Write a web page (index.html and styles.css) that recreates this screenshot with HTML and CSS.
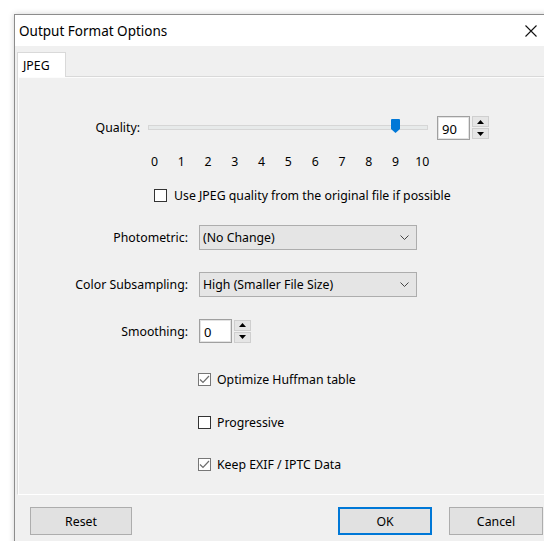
FILE: index.html
```html
<!DOCTYPE html>
<html>
<head>
<meta charset="utf-8">
<title>Output Format Options</title>
<link rel="stylesheet" href="styles.css">
</head>
<body>
<div class="window">
  <div class="titlebar">
    <span class="title">Output Format Options</span>
    <svg class="close" width="12" height="12" viewBox="0 0 12 12"><path d="M0.5 0.5 L11.5 11.5 M11.5 0.5 L0.5 11.5" stroke="#111" stroke-width="1.1" fill="none"/></svg>
  </div>
  <div class="client">
    <div class="tabs">
      <div class="tab">JPEG</div>
    </div>
    <div class="pane">
      <div class="row quality-row">
        <span class="quality-label">Quality:</span>
        <div class="slider">
          <div class="track"></div>
          <svg class="thumb" style="left: 243px" width="9" height="14" viewBox="0 0 9 14"><path d="M0 1 Q0 0 1 0 L8 0 Q9 0 9 1 L9 10 L4.5 14 L0 10 Z" fill="#0078d7"/></svg>
        </div>
        <div class="spin">
          <div class="spin-box">90</div>
          <div class="spin-buttons">
            <div class="spin-btn"><svg width="7" height="4" viewBox="0 0 7 4"><path d="M3.5 0 L7 4 L0 4 Z" fill="#000"/></svg></div>
            <div class="spin-btn"><svg width="7" height="4" viewBox="0 0 7 4"><path d="M0 0 L7 0 L3.5 4 Z" fill="#000"/></svg></div>
          </div>
        </div>
      </div>
      <div class="ticks">
        <span>0</span><span>1</span><span>2</span><span>3</span><span>4</span><span>5</span><span>6</span><span>7</span><span>8</span><span>9</span><span>10</span>
      </div>
      <label class="check check-wide"><span class="box"></span>Use JPEG quality from the original file if possible</label>
      <div class="row field field-photo">
        <span class="label">Photometric:</span>
        <div class="select"><span>(No Change)</span><svg width="9" height="5" viewBox="0 0 9 5"><path d="M0.5 0.5 L4.5 4.5 L8.5 0.5" stroke="#444" fill="none"/></svg></div>
      </div>
      <div class="row field field-color">
        <span class="label">Color Subsampling:</span>
        <div class="select"><span>High (Smaller File Size)</span><svg width="9" height="5" viewBox="0 0 9 5"><path d="M0.5 0.5 L4.5 4.5 L8.5 0.5" stroke="#444" fill="none"/></svg></div>
      </div>
      <div class="row field field-smooth">
        <span class="label">Smoothing:</span>
        <div class="spin">
          <div class="spin-box">0</div>
          <div class="spin-buttons">
            <div class="spin-btn"><svg width="7" height="4" viewBox="0 0 7 4"><path d="M3.5 0 L7 4 L0 4 Z" fill="#000"/></svg></div>
            <div class="spin-btn"><svg width="7" height="4" viewBox="0 0 7 4"><path d="M0 0 L7 0 L3.5 4 Z" fill="#000"/></svg></div>
          </div>
        </div>
      </div>
      <label class="check opt opt-huff"><span class="box checked"><svg width="11" height="9" viewBox="0 0 11 9"><path d="M1 4.5 L4 7.5 L10 1" stroke="#6d6d6d" stroke-width="1.2" fill="none"/></svg></span>Optimize Huffman table</label>
      <label class="check opt opt-prog"><span class="box"></span>Progressive</label>
      <label class="check opt opt-exif"><span class="box checked"><svg width="11" height="9" viewBox="0 0 11 9"><path d="M1 4.5 L4 7.5 L10 1" stroke="#6d6d6d" stroke-width="1.2" fill="none"/></svg></span>Keep EXIF / IPTC Data</label>
    </div>
    <div class="buttons">
      <button class="btn btn-reset">Reset</button>
      <span class="spacer"></span>
      <button class="btn btn-ok">OK</button>
      <button class="btn btn-cancel">Cancel</button>
    </div>
  </div>
</div>
</body>
</html>
```

FILE: styles.css
```css
html, body {
  margin: 0;
  padding: 0;
  background: #ffffff;
  overflow: hidden;
}

body {
  font-family: "Noto Sans", "Open Sans", sans-serif;
  font-size: 12.3px;
  color: #000;
}

.window {
  margin: 14px 0 0 14px;
  width: 560px;
  height: 560px;
  border: 1px solid #8c8c8c;
  box-shadow: 0 0 6px rgba(0, 0, 0, 0.18);
  background: #f0f0f0;
  box-sizing: border-box;
}

.titlebar {
  height: 31px;
  background: #ffffff;
  display: flex;
  align-items: center;
  padding-left: 4px;
}

.title {
  font-size: 13.5px;
  flex: 1;
}

.close {
  margin-right: 36px;
}

.client {
  padding: 6px 0 0 2px;
}

.tabs {
  display: flex;
  height: 25px;
}

.tab {
  width: 49px;
  height: 25px;
  box-sizing: border-box;
  border: 1px solid #d9d9d9;
  border-bottom: none;
  background: #ffffff;
  padding: 4px 0 0 5px;
  position: relative;
  z-index: 1;
}

.pane {
  height: 419px;
  box-sizing: border-box;
  border: 1px solid #d9d9d9;
  border-bottom: 1px solid #ffffff;
  margin-top: -1px;
  background: #f0f0f0;
  box-shadow: inset 1px 1px 0 #fcfcfc;
  padding-top: 39px;
}

.row {
  display: flex;
  align-items: center;
}

/* Quality slider row */
.quality-row {
  height: 23px;
}

.quality-label {
  width: 122px;
  text-align: right;
  margin-right: 8px;
}

.slider {
  position: relative;
  width: 280px;
  height: 23px;
}

.track {
  position: absolute;
  left: 0;
  right: 0;
  top: 9px;
  height: 3px;
  background: #e7eaea;
  border: 1px solid #d6d6d6;
}

.thumb {
  position: absolute;
  top: 3px;
}

.quality-row .spin {
  margin-left: 9px;
}

.spin {
  display: flex;
  align-items: center;
}

.spin-box {
  width: 33px;
  height: 24px;
  box-sizing: border-box;
  border: 1px solid #a0a0a0;
  box-shadow: inset 0 0 0 1px #e3e3e3;
  background: #fff;
  font-size: 13px;
  padding: 3px 0 0 4px;
}

.spin-buttons {
  margin-left: 2px;
  display: flex;
  flex-direction: column;
  gap: 1px;
}

.spin-btn {
  width: 17px;
  height: 11px;
  box-sizing: border-box;
  border: 1px solid #cfcfcf;
  background: #e5e5e5;
  display: flex;
  align-items: center;
  justify-content: center;
}

/* Tick labels under the slider */
.ticks {
  display: flex;
  margin: 15px 0 0 123px;
  height: 16px;
  line-height: 16px;
}

.ticks span {
  width: 26.8px;
  text-align: center;
}

.check {
  display: flex;
  align-items: center;
  height: 16px;
}

.box {
  width: 13px;
  height: 13px;
  box-sizing: border-box;
  border: 1px solid #333;
  background: #fff;
  margin-right: 7px;
  display: flex;
  align-items: center;
  justify-content: center;
}

.box.checked {
  border-color: #777;
}

.check-wide {
  margin: 17px 0 0 136px;
}

.field .label {
  width: 170px;
  text-align: right;
  margin-right: 11px;
}

.field-photo {
  margin-top: 22px;
}

.field-color {
  margin-top: 22px;
}

.field-smooth {
  margin-top: 22px;
}

.select {
  width: 218px;
  height: 25px;
  box-sizing: border-box;
  border: 1px solid #adadad;
  background: #e5e5e5;
  display: flex;
  align-items: center;
  justify-content: space-between;
  padding: 0 7px 0 3px;
}

.opt {
  margin-left: 180px;
}

.opt .box {
  margin-right: 6px;
}

.opt-huff {
  margin-top: 28px;
}

.opt-prog {
  margin-top: 27px;
}

.opt-exif {
  margin-top: 26px;
}

.buttons {
  display: flex;
  margin-top: 12px;
  padding-left: 13px;
}

.btn {
  font-family: inherit;
  font-size: 12.3px;
  height: 28px;
  background: #e1e1e1;
  border: 1px solid #adadad;
  padding: 0;
  color: #000;
}

.btn-reset {
  width: 102px;
}

.spacer {
  flex: none;
  width: 206px;
}

.btn-ok {
  width: 94px;
  border-color: #0078d7;
  box-shadow: inset 0 0 0 1px #0078d7;
}

.btn-cancel {
  width: 94px;
  margin-left: 17px;
}
```
